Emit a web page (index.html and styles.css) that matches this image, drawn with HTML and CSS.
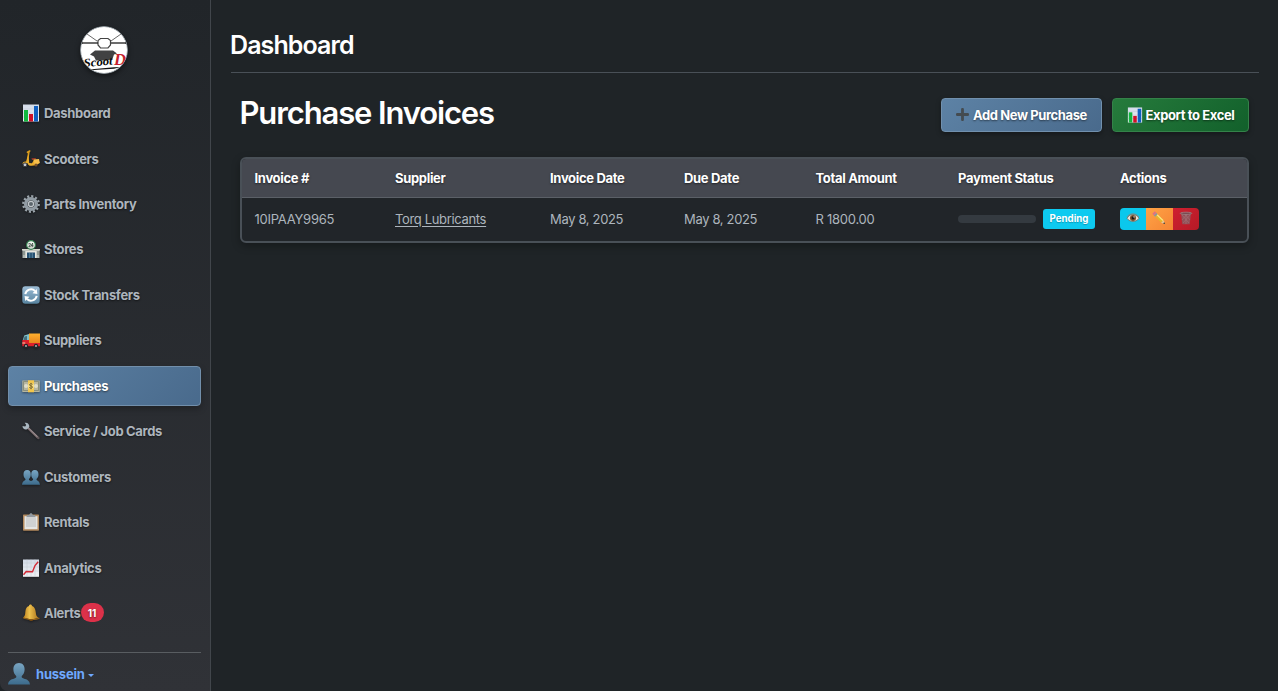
FILE: index.html
```html
<!DOCTYPE html>
<html lang="en">
<head>
<meta charset="utf-8">
<title>Purchase Invoices</title>
<link rel="stylesheet" href="styles.css">
</head>
<body>
<svg width="0" height="0" class="defs" aria-hidden="true">
  <defs>
    <linearGradient id="paper" x1="0" y1="0" x2="0" y2="1"><stop offset="0" stop-color="#d3dbe8"/><stop offset="1" stop-color="#eef1f4"/></linearGradient>
    <linearGradient id="person" x1="0" y1="0" x2="0" y2="1"><stop offset="0" stop-color="#79a5c2"/><stop offset="1" stop-color="#3c6b8c"/></linearGradient>
    <linearGradient id="gold" x1="0" y1="0" x2="1" y2="0"><stop offset="0" stop-color="#b97c1c"/><stop offset=".4" stop-color="#edc04c"/><stop offset="1" stop-color="#a9701a"/></linearGradient>
    <linearGradient id="sync" x1="0" y1="0" x2="0" y2="1"><stop offset="0" stop-color="#9dbdd6"/><stop offset="1" stop-color="#57839f"/></linearGradient>
    <linearGradient id="cargo" x1="0" y1="0" x2="0" y2="1"><stop offset="0" stop-color="#ffb02e"/><stop offset="1" stop-color="#e8851c"/></linearGradient>
    <symbol id="chart" viewBox="0 0 18 18">
      <rect x="1" y=".5" width="16" height="17" fill="url(#paper)"/>
      <path d="M1 5h16M1 9h16M1 13h16" stroke="#bcc7d6" stroke-width=".5"/>
      <rect x="2" y="6" width="4" height="11.500" fill="#12b83e"/><rect x="7" y="10" width="4" height="7.500" fill="#cf1128"/><rect x="12" y="2" width="4" height="15.500" fill="#1060c0"/>
    </symbol>
    <symbol id="person-icon" viewBox="0 0 22 22">
      <path d="M11 0C7.300 0 5.200 2.800 5.400 6.700c.1 2.800 1.300 4.900 2.800 6.200.5 1.400-.1 2-1.800 2.500C2.800 16.500.4 17.400 0 21.500h22c-.4-4.100-2.800-5-6.400-6.100-1.700-.5-2.300-1.100-1.800-2.500 1.500-1.300 2.700-3.400 2.800-6.200C16.800 2.800 14.700 0 11 0z" fill="url(#person)"/>
    </symbol>
  </defs>
</svg>
<div class="app">
  <aside class="sidebar">
    <div class="brand">
      <svg class="logo" viewBox="0 0 48 48">
        <defs><clipPath id="disc"><circle cx="24" cy="24" r="23.200"/></clipPath></defs>
        <circle cx="24" cy="24" r="23.500" fill="#fff" stroke="#8d969c"/>
        <g clip-path="url(#disc)">
          <path d="M7 8l10 7M41 8l-10 7" stroke="#444" stroke-width=".8"/>
          <path d="M1 17h17M30 17h17" stroke="#444" stroke-width="2.200"/>
          <path d="M3 17h14M31 17h14" stroke="#ccc" stroke-width=".6"/>
          <path d="M20.500 12.500h7.500l2.500 2v4.500l-2.500 3h-7.500l-2.500-3v-4.500z" fill="#fff" stroke="#444" stroke-width="1.200"/>
          <path d="M15 24.500h18l4 3-3 1-1.500 4.500-6 1.500H16l-2-4-4-2z" fill="#414243"/>
          <text class="logo-word" x="4" y="41" transform="rotate(-5 4 41)" textLength="29" lengthAdjust="spacingAndGlyphs">Scoot</text>
          <text class="logo-d" x="34" y="39" textLength="12" lengthAdjust="spacingAndGlyphs">D</text>
          <path d="M9 43.500l25-2.200 7-.3-7 1.700L14 44z" fill="#111"/>
        </g>
      </svg>
    </div>
    <nav class="nav">
      <a class="nav-item"><svg class="icon"><use href="#chart"/></svg><span>Dashboard</span></a>
      <a class="nav-item"><svg class="icon" viewBox="0 0 18 18"><path d="M5.500 2.300l2.200-1.300M7 1.500L5.200 11.500" stroke="#d89a1a" stroke-width="1.600" fill="none" stroke-linecap="round"/><path d="M6.500 4L4.300 11.500C2 11 .5 12.200.6 14l5-.8c.7 2 2 2.800 4.200 2.500l4.500-.5 3.200-2.200-.7-3-4.800-.2-2 3.500-2.800-.3z" fill="#e9ad2d"/><path d="M9.500 8.300l4-.4 1 1.500-4.500.7z" fill="#9c3b27"/><path d="M11.500 9.500l5.500-.5.8 4-5 1.500z" fill="#f7c04c"/><circle cx="3" cy="14.800" r="1.900" fill="#c8cbd0" stroke="#3d4044"/><circle cx="14" cy="15" r="1.500" fill="#76502b"/></svg><span>Scooters</span></a>
      <a class="nav-item"><svg class="icon" viewBox="0 0 18 18"><circle cx="9" cy="9" r="7.700" fill="none" stroke="#9ca5ac" stroke-width="2.400" stroke-dasharray="2.050 1.981"/><circle cx="9" cy="9" r="5.300" fill="none" stroke="#929ca4" stroke-width="3.600"/><circle cx="9" cy="9" r="2.600" fill="#5d666d" stroke="#c2c8cc" stroke-width="1.200"/></svg><span>Parts Inventory</span></a>
      <a class="nav-item"><svg class="icon" viewBox="0 0 18 18"><path d="M.5 9.500h17V18H.5z" fill="#afb6b1"/><path d="M0 9h18v1.500H0z" fill="#d4d6cc"/><path d="M3.500 11h11v7h-11z" fill="#e5e6df"/><path d="M5 12.500h8V18H5z" fill="#244f70"/><path d="M7.700 13v5M10.300 13v5" stroke="#7fa7bd" stroke-width=".6"/><path d="M1 12h2M1 14h2M15 12h2M15 14h2" stroke="#6c7771"/><circle cx="9" cy="5" r="4.400" fill="#f6faf5" stroke="#378053" stroke-width="1.200"/><text class="store-label" x="6.200" y="6.700" textLength="5.600" lengthAdjust="spacingAndGlyphs">24</text></svg><span>Stores</span></a>
      <a class="nav-item"><svg class="icon" viewBox="0 0 18 18"><rect x=".3" y=".3" width="17.400" height="17.400" rx="3" fill="url(#sync)"/><path d="M3.300 8.200A5.800 5.800 0 0 1 13 4.900M14.700 9.800A5.800 5.800 0 0 1 5 13.100" fill="none" stroke="#fff" stroke-width="2"/><path d="M10.500 7.300l4.900.6-.7-4.900zM7.500 10.700l-4.900-.6.7 4.900z" fill="#fff"/></svg><span>Stock Transfers</span></a>
      <a class="nav-item"><svg class="icon" viewBox="0 0 18 18"><path d="M7 2.500h11v9.500H7z" fill="url(#cargo)"/><path d="M2.200 4.500L7 3v6H.8z" fill="#7fc1ca"/><path d="M2.500 5.500L5 5v4H1.500z" fill="#456e7c"/><path d="M.3 9H7v3h11v3.200H.3z" fill="#dd202b"/><path d="M.3 12h3" stroke="#f5d5b0"/><circle cx="4" cy="15" r="2.200" fill="#242729"/><circle cx="14" cy="15" r="2.200" fill="#242729"/><circle cx="4" cy="15" r=".9" fill="#b9bdc0"/><circle cx="14" cy="15" r=".9" fill="#b9bdc0"/></svg><span>Suppliers</span></a>
      <a class="nav-item active"><svg class="icon" viewBox="0 0 18 18"><path d="M.3 3.500h17.400V15H.3z" fill="#b6b6a0"/><path d="M1.500 4.500h15v9h-15z" fill="none" stroke="#77806f" stroke-width=".7"/><circle cx="4" cy="9" r="2" fill="#deddcb"/><circle cx="14" cy="9" r="2" fill="#deddcb"/><path d="M6 3.300h6v12H6z" fill="#f3c74c"/><circle cx="9" cy="9" r="3.200" fill="#f8df83"/><path d="M10.700 7.300c-1-1-3.300-.7-3.300.5 0 1.500 3.200.8 3.200 2.300 0 1.300-2.500 1.500-3.500.3M9 5.800v6.500" fill="none" stroke="#69551e" stroke-width=".8"/></svg><span>Purchases</span></a>
      <a class="nav-item"><svg class="icon" viewBox="0 0 18 18"><path d="M5.500 5.500L16.300 16" stroke="#77696b" stroke-width="2.400" stroke-linecap="round"/><path d="M6 5.500L15.500 14.800" stroke="#b3a6a8" stroke-width=".8"/><path d="M2.700.8l1.500 2.300-1 1.400L.5 4C.5 6.700 2.800 8 5 7.200L7.300 5C7.700 2.300 5.500.2 2.700.8z" fill="#a9b6c0"/><circle cx="16" cy="15.900" r=".6" fill="#302c30"/></svg><span>Service / Job Cards</span></a>
      <a class="nav-item"><svg class="icon" viewBox="0 0 18 18"><path d="M5.200 2C2.700 2 1.300 4 1.500 6.700c.1 2 .9 3.500 2 4.300C3.600 13 .4 12.500 0 16.800h18c-.4-4.300-3.600-3.800-3.500-5.800 1.100-.8 1.900-2.300 2-4.300C16.700 4 15.300 2 12.800 2S9.100 4 9.200 6.700c.1 2 .8 3.500 1.900 4.300.1 1.300-.8 1.500-2.100 2-1.300-.5-2.200-.7-2.100-2C8 10.200 8.700 8.700 8.800 6.700 8.900 4 7.700 2 5.200 2z" fill="url(#person)"/></svg><span>Customers</span></a>
      <a class="nav-item"><svg class="icon" viewBox="0 0 18 18"><rect x="1" y="1.500" width="16" height="16.300" rx=".7" fill="#b3895d"/><path d="M2.500 3.200h13v13h-13z" fill="#e5e5e3"/><path d="M4 5h10v9H4z" fill="#d0d1d1"/><path d="M5.200 2h2.100c.2-2.200 3.200-2.200 3.400 0h2.100l1 2.300H4.200z" fill="#92999f"/></svg><span>Rentals</span></a>
      <a class="nav-item"><svg class="icon" viewBox="0 0 18 18"><rect x="1" y=".5" width="16" height="17.300" fill="url(#paper)"/><path d="M1 4h16M1 8h16M1 12h16M5 .5v17M9 .5v17M13 .5v17" stroke="#c0cad2" stroke-width=".5"/><path d="M1.500 15.800l2.700-3.300 6.300.2 2.500-6.200 3.200-3.700" fill="none" stroke="#d32935" stroke-width="1.400"/></svg><span>Analytics</span></a>
      <a class="nav-item"><svg class="icon" viewBox="0 0 18 18"><path d="M7 2c0-2 3-2 3 0 3.300 1 3.700 5 4 8 .2 2 1.200 2.800 3 4L9 15.500 1 13.500c1.500-1.200 2-2 2.200-4C3.600 6 3.700 3 7 2z" fill="url(#gold)"/><path d="M1 13.200c4 2 12 2.500 16.500.5v1.100c-4 2-12.500 1.500-16.500-.5z" fill="#9b6518"/><path d="M7 15.500c.3 2 4 2 4.300 0z" fill="#704512"/></svg><span>Alerts</span><b class="count">11</b></a>
    </nav>
    <div class="account"><svg class="avatar"><use href="#person-icon"/></svg><span>hussein</span><i class="caret"></i></div>
  </aside>
  <main class="main">
    <header class="topbar"><h1>Dashboard</h1></header>
    <section class="content">
      <div class="heading">
        <h2>Purchase Invoices</h2>
        <div class="buttons">
          <button class="btn blue"><svg class="plus" viewBox="0 0 13 13"><path d="M6.500 1.300v10.400M1.300 6.500h10.400" stroke="#444b50" stroke-width="2.800" stroke-linecap="round"/></svg><span>Add New Purchase</span></button>
          <button class="btn green"><svg class="sheet"><use href="#chart"/></svg><span>Export to Excel</span></button>
        </div>
      </div>
      <div class="table">
        <div class="row head"><span>Invoice #</span><span>Supplier</span><span>Invoice Date</span><span>Due Date</span><span>Total Amount</span><span>Payment Status</span><span>Actions</span></div>
        <div class="row body"><span>10IPAAY9965</span><span><a class="link">Torq Lubricants</a></span><span>May 8, 2025</span><span>May 8, 2025</span><span>R 1800.00</span>
          <span class="status"><i class="track"></i><b class="pending">Pending</b></span>
          <span class="actions">
            <button class="view"><svg viewBox="0 0 14 14"><path d="M1 7.300C3.500 2.500 10 2 13 7.300 10 11.500 4 11.500 1 7.300z" fill="#e9e2d8" stroke="#76695c" stroke-width=".8"/><path d="M1 5.800C4 1.800 10 1.800 13 6" fill="none" stroke="#8a8178" stroke-width=".8"/><circle cx="7" cy="7" r="3" fill="#76502d"/><circle cx="7" cy="7" r="1.400" fill="#151313"/><circle cx="8" cy="5.900" r=".6" fill="#fff"/></svg></button>
            <button class="edit"><svg viewBox="0 0 14 14"><path d="M4 4l6.500 6.500" stroke="#e5b52e" stroke-width="3.500"/><path d="M4.800 3.500l6.200 6" stroke="#ffe680" stroke-width="1.200"/><path d="M3 3l1.400 1.400" stroke="#8d979e" stroke-width="3.500"/><path d="M1.600 1.600L3 3" stroke="#dd6f87" stroke-width="3.500"/><path d="M11.700 9.200l1.300 3.900-3.900-1.400z" fill="#e5c69a"/><path d="M12.300 11.200l.7 1.900-1.900-.7z" fill="#222"/></svg></button>
            <button class="delete"><svg viewBox="0 0 14 14"><path d="M2 2.500h10l-1.300 10.700H3.300z" fill="#925057"/><path d="M3 4l7 8M6 3l5 6M11 4l-7 8M8 3L3 9M7 3v10" stroke="#a9797e" stroke-width=".5"/><ellipse cx="7" cy="2.300" rx="5.800" ry="1.100" fill="#74464c" stroke="#a48a8d" stroke-width=".7"/></svg></button>
          </span>
        </div>
      </div>
    </section>
  </main>
</div>
</body>
</html>
```
FILE: styles.css
```css
* { box-sizing: border-box; }
body { margin: 0; background: #1f2427; color: #fff; font-family: Inter, "Liberation Sans", sans-serif; font-size: 13px; overflow: hidden; }
.defs { position: absolute; }
.app { display: flex; width: 100%; height: 691px; }
h1, h2 { margin: 0; }
button { font: inherit; color: inherit; margin: 0; letter-spacing: inherit; }

.sidebar { width: 211px; flex: none; display: flex; flex-direction: column; padding: 26px 9px 0 8px; background: linear-gradient(180deg, #212529, #303237); border-right: 1px solid #41464b; border-bottom-left-radius: 8px; }
.brand { display: flex; justify-content: center; height: 67.700px; padding-right: 1px; }
.logo { width: 48px; height: 48px; border-radius: 50%; box-shadow: 0 2px 5px rgba(0, 0, 0, .5); }
.logo-word { font: italic bold 12px "Liberation Serif", serif; fill: #080808; letter-spacing: 0; }
.logo-d { font: italic bold 17px "Liberation Serif", serif; fill: #c6202d; }
.store-label { font-size: 4.500px; font-weight: 700; fill: #33463b; letter-spacing: 0; }
.nav { display: flex; flex-direction: column; gap: 5.450px; }
.nav-item { display: flex; align-items: center; height: 40px; padding: 0 13px; border: 1px solid transparent; border-radius: 4px; color: #adb5bd; font-weight: 650; letter-spacing: -.32px; text-shadow: 0 1px 2px rgba(0, 0, 0, .55); white-space: nowrap; }
.nav-item.active { color: #fff; background: linear-gradient(135deg, #5d82a5, #496a8c); border-color: #728fab; box-shadow: 0 3px 6px rgba(0, 0, 0, .25); }
.icon { width: 18px; height: 18px; flex: none; margin-right: 4px; filter: drop-shadow(0 1px 1px rgba(0, 0, 0, .4)); }
.count { width: 23px; height: 19px; border-radius: 10px; display: grid; place-items: center; background: #dc3149; color: #fff; font-size: 10px; font-weight: 700; letter-spacing: 0; }
.account { display: flex; align-items: center; height: 39px; margin-top: 19.300px; padding-top: 4px; border-top: 1px solid #595d61; color: #6ea8fe; font-weight: 650; letter-spacing: -.2px; }
.avatar { width: 22px; height: 22px; margin-right: 6px; }
.caret { margin: 2px 0 0 3px; border: 3px solid transparent; border-top-color: #6ea8fe; border-bottom: 0; }

.main { flex: 1; padding: 0 19px 0 20px; }
.topbar { height: 73px; padding-top: 18px; border-bottom: 1px solid #495057; }
.topbar h1 { font-size: 25px; line-height: 54px; font-weight: 600; letter-spacing: -.9px; margin-left: -1px; }
.content { padding: 25px 10px 0 9px; }
.heading { display: flex; justify-content: space-between; height: 59px; }
.heading h2 { font-size: 31px; line-height: 29px; font-weight: 560; letter-spacing: -1.130px; margin-left: -.5px; }
.buttons { display: flex; gap: 10px; height: 34px; }
.btn { display: flex; align-items: center; justify-content: center; padding: 0 0 1px; border-radius: 4px; font-size: 13px; font-weight: 650; letter-spacing: -.4px; text-shadow: 0 1px 2px rgba(0, 0, 0, .5); box-shadow: 0 2px 5px rgba(0, 0, 0, .35); white-space: nowrap; }
.blue { width: 161px; background: linear-gradient(135deg, #5d82a5, #496a8c); border: 1px solid #7190ad; }
.green { width: 137px; background: linear-gradient(135deg, #267b3c, #12602b); border: 1px solid #348249; }
.plus { width: 13px; height: 13px; margin-right: 4px; }
.sheet { width: 16px; height: 16px; margin-right: 3px; }

.table { height: 86px; border: 2px solid #495057; border-radius: 6px; background: #212529; overflow: hidden; box-shadow: 0 3px 8px rgba(0, 0, 0, .3); }
.row { display: grid; grid-template-columns: 140.500px 155px 134px 131.500px 142.500px 162px 1fr; align-items: center; padding-left: 12.500px; white-space: nowrap; }
.head { height: 39px; background: #454850; border-bottom: 1px solid #5b6067; padding-bottom: 1px; font-weight: 650; letter-spacing: -.32px; text-shadow: 0 1px 2px rgba(0, 0, 0, .5); }
.body { height: 43px; padding-bottom: 2px; color: #adb5bd; letter-spacing: -.34px; }
.body > span:first-child { letter-spacing: -.25px; }
.body > span:nth-child(5) { letter-spacing: -.25px; }
.link { text-decoration: underline; text-underline-offset: 2px; }
.status { display: flex; align-items: center; gap: 7px; }
.track { width: 78px; height: 8px; border-radius: 4px; background: #343a40; }
.pending { display: grid; place-items: center; width: 52px; height: 20px; border-radius: 3px; background: #0dcaf0; color: #fff; font-size: 9.700px; font-weight: 700; letter-spacing: 0; text-shadow: 0 1px 1px rgba(0, 0, 0, .25); }
.actions { display: flex; width: 79px; height: 22px; border-radius: 4px; overflow: hidden; }
.actions button { display: grid; place-items: center; flex: 1; padding: 0 0 1px; border: 0; }
.actions svg { width: 14px; height: 14px; }
.view { background: #0bc8ec; }
.edit { background: linear-gradient(135deg, #ffa346, #f58534); }
.delete { background: linear-gradient(135deg, #cf2030, #b51a26); }
```
